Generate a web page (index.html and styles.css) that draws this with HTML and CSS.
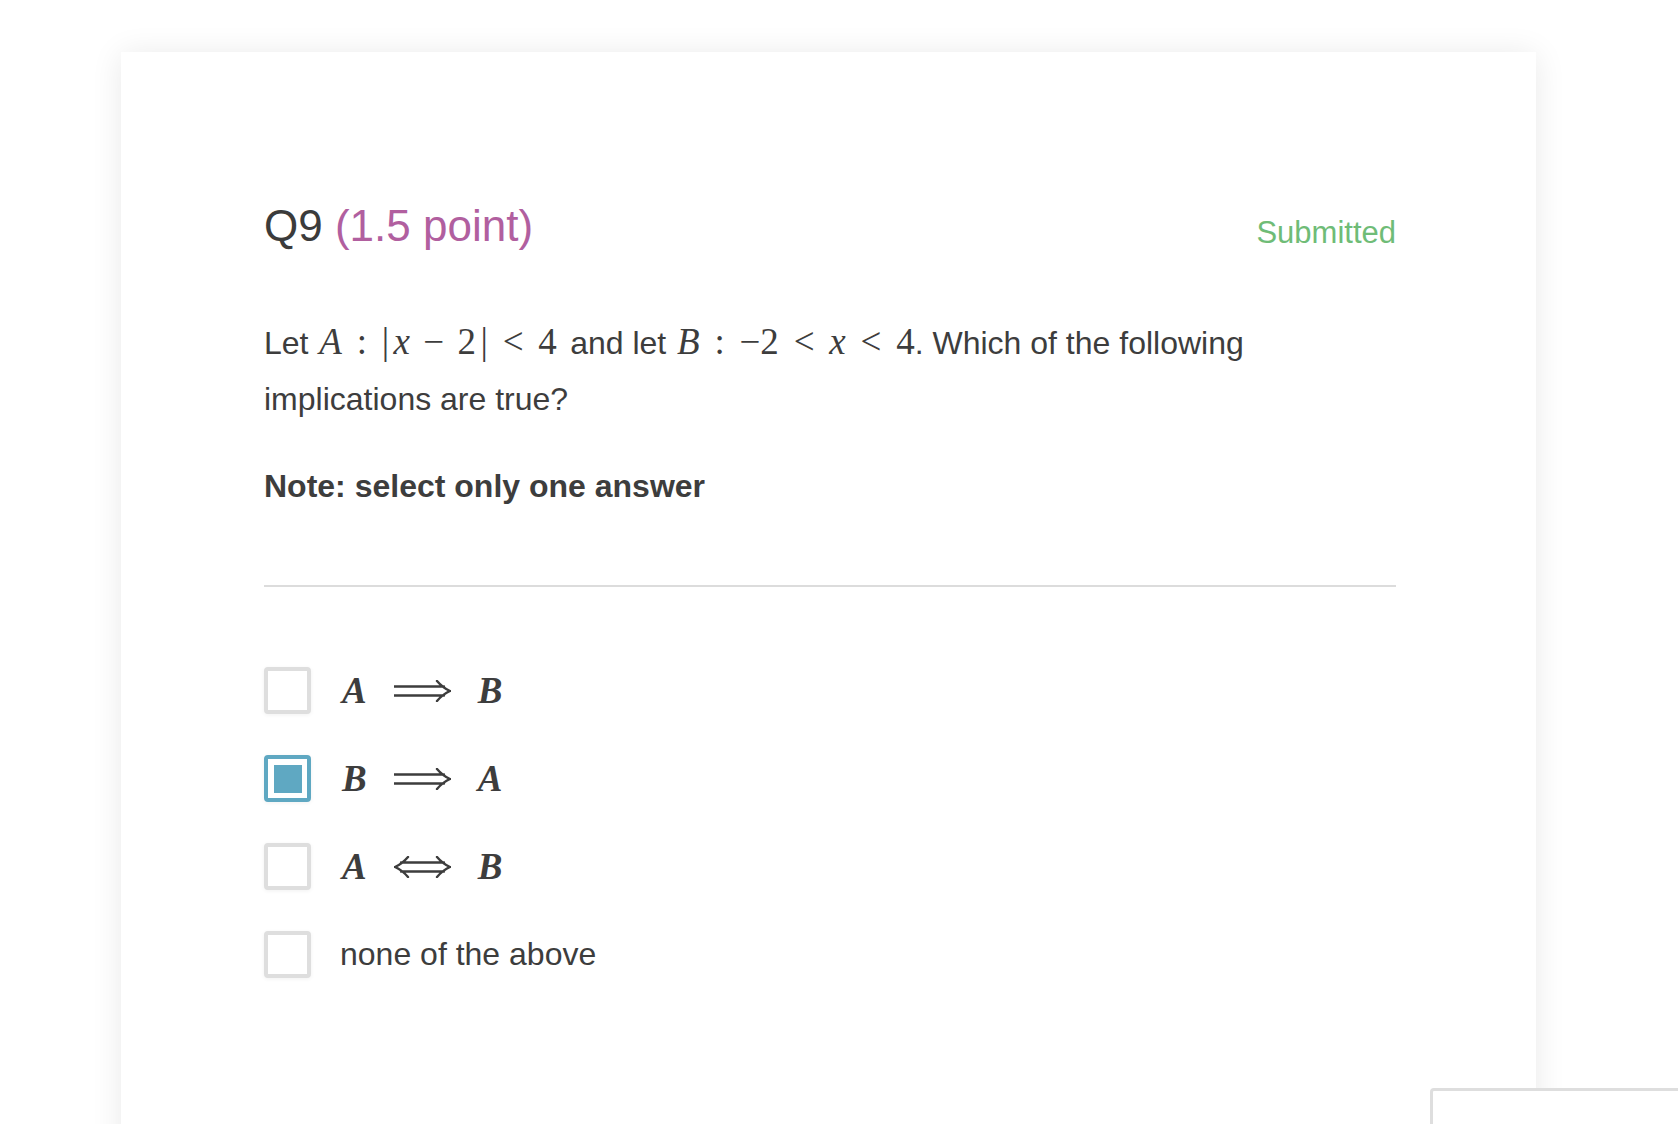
FILE: index.html
```html
<!DOCTYPE html>
<html lang="en">
<head>
<meta charset="utf-8">
<title>Q9</title>
<link rel="stylesheet" href="styles.css">
</head>
<body>
<main class="card">
  <header class="q-head">
    <h2 class="q-title">Q9 <span class="q-points">(1.5 point)</span></h2>
    <span class="q-status">Submitted</span>
  </header>
  <p class="q-text">Let <span class="m gap-after"><i>A</i><span class="rel">:</span><span class="bar">|</span><i>x</i><span class="bin">−</span>2<span class="bar end">|</span><span class="rel">&lt;</span>4</span> and let <span class="m"><i>B</i><span class="rel">:</span>−2<span class="rel">&lt;</span><i>x</i><span class="rel">&lt;</span>4</span>. Which of the following implications are true?</p>
  <p class="q-note">Note: select only one answer</p>
  <hr class="divider">
  <ul class="options">
    <li class="option">
      <span class="box"></span>
      <span class="opt-math"><i>A</i>
        <svg class="arrow" width="57" height="22" viewBox="0 0 57 22"><path d="M0 6.5H50M0 15.5H50M43 1Q49 8 56 11Q49 14 43 21"/></svg>
        <i>B</i></span>
    </li>
    <li class="option">
      <span class="box checked"><span class="fill"></span></span>
      <span class="opt-math"><i>B</i>
        <svg class="arrow" width="57" height="22" viewBox="0 0 57 22"><path d="M0 6.5H50M0 15.5H50M43 1Q49 8 56 11Q49 14 43 21"/></svg>
        <i>A</i></span>
    </li>
    <li class="option">
      <span class="box"></span>
      <span class="opt-math"><i>A</i>
        <svg class="arrow" width="57" height="22" viewBox="0 0 57 22"><path d="M7 6.5H50M7 15.5H50M43 1Q49 8 56 11Q49 14 43 21M14 1Q8 8 1 11Q8 14 14 21"/></svg>
        <i>B</i></span>
    </li>
    <li class="option">
      <span class="box"></span>
      <span class="opt-text">none of the above</span>
    </li>
  </ul>
</main>
<div class="corner-panel"></div>
</body>
</html>
```

FILE: styles.css
```css
html, body {
  margin: 0;
  padding: 0;
  background: #ffffff;
  overflow: hidden;
}

body {
  font-family: "Liberation Sans", Arial, sans-serif;
  color: #3d3d3d;
}

.card {
  margin: 52px 0 0 121px;
  width: 1415px;
  min-height: 1200px;
  box-sizing: border-box;
  padding: 149px 140px 0 143px;
  background: #ffffff;
  box-shadow: 0 2px 30px rgba(0, 0, 0, 0.09);
}

.q-head {
  display: flex;
  justify-content: space-between;
  align-items: baseline;
}

.q-title {
  margin: 0;
  font-size: 44px;
  line-height: 50px;
  font-weight: normal;
  color: #3b3b3b;
}

.q-points {
  color: #b15f9f;
}

.q-status {
  font-size: 31px;
  color: #6fbc77;
  position: relative;
  top: 2px;
}

.q-text {
  margin: 64px 0 0;
  font-size: 32px;
  line-height: 56px;
}

.m {
  font-family: "Liberation Serif", "Times New Roman", serif;
  font-size: 37px;
  line-height: 1;
  margin-left: 0.05em;
}

.m.gap-after {
  margin-right: 0.12em;
}

.m i {
  font-style: italic;
}

.rel {
  margin: 0 0.4em;
}

.bin {
  margin: 0 0.36em;
}

.bar {
  margin-right: 0.12em;
}

.bar.end {
  margin: 0 0 0 0.12em;
}

.q-note {
  margin: 31px 0 0;
  font-size: 32px;
  line-height: 56px;
  font-weight: bold;
}

.divider {
  margin: 71px 0 0;
  border: 0;
  height: 2px;
  background: #dcdcdc;
}

.options {
  list-style: none;
  margin: 80px 0 0;
  padding: 0;
  display: flex;
  flex-direction: column;
  gap: 41px;
}

.option {
  display: flex;
  align-items: center;
  gap: 29px;
  height: 47px;
}

.box {
  width: 47px;
  height: 47px;
  box-sizing: border-box;
  border: 4px solid #dedede;
  border-radius: 4px;
  background: #ffffff;
  box-shadow: 0 1px 4px rgba(0, 0, 0, 0.06);
  display: flex;
  align-items: center;
  justify-content: center;
  flex: none;
}

.box.checked {
  border-color: #5fa8c2;
}

.fill {
  width: 28px;
  height: 28px;
  background: #5fa8c2;
}

.opt-math {
  display: flex;
  align-items: center;
  gap: 27px;
  margin-left: 2px;
  font-family: "Liberation Serif", "Times New Roman", serif;
  font-size: 37px;
  font-weight: bold;
}

.opt-math i {
  font-style: italic;
}

.arrow {
  fill: none;
  stroke: #3d3d3d;
  stroke-width: 2.4;
  stroke-linecap: round;
}

.opt-text {
  font-size: 32px;
}

.corner-panel {
  position: fixed;
  left: 1430px;
  top: 1088px;
  width: 300px;
  height: 100px;
  box-sizing: border-box;
  border: 3px solid #dedede;
  border-radius: 4px;
  background: #ffffff;
}
```
